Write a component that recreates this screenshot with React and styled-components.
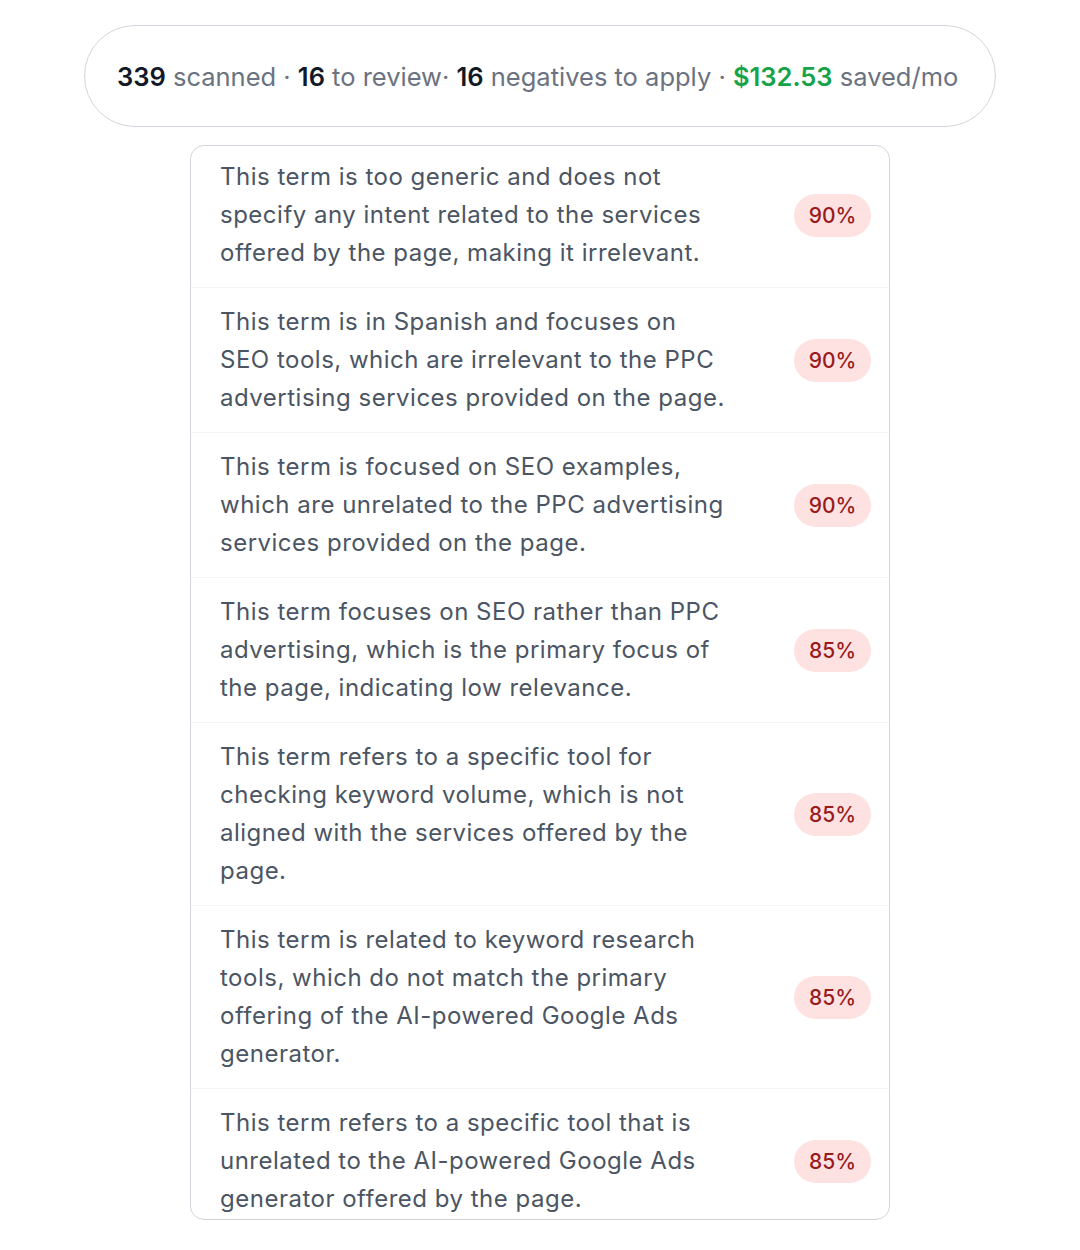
import React from "react";
import styled, { createGlobalStyle } from "styled-components";

const GlobalStyle = createGlobalStyle`
  html, body {
    margin: 0;
    padding: 0;
    background: #ffffff;
  }
  body {
    font-family: Inter, "Liberation Sans", sans-serif;
    -webkit-font-smoothing: antialiased;
  }
`;

const suggestions = [
  {
    reason:
      "This term is too generic and does not specify any intent related to the services offered by the page, making it irrelevant.",
    score: 90,
  },
  {
    reason:
      "This term is in Spanish and focuses on SEO tools, which are irrelevant to the PPC advertising services provided on the page.",
    score: 90,
  },
  {
    reason:
      "This term is focused on SEO examples, which are unrelated to the PPC advertising services provided on the page.",
    score: 90,
  },
  {
    reason:
      "This term focuses on SEO rather than PPC advertising, which is the primary focus of the page, indicating low relevance.",
    score: 85,
  },
  {
    reason:
      "This term refers to a specific tool for checking keyword volume, which is not aligned with the services offered by the page.",
    score: 85,
  },
  {
    reason:
      "This term is related to keyword research tools, which do not match the primary offering of the AI-powered Google Ads generator.",
    score: 85,
  },
  {
    reason:
      "This term refers to a specific tool that is unrelated to the AI-powered Google Ads generator offered by the page.",
    score: 85,
  },
];

export default function App() {
  return (
    <Page>
      <GlobalStyle />
      <Summary>
        <Strong>339</Strong> scanned · <Strong>16</Strong> to review·{" "}
        <Strong>16</Strong> negatives to apply ·{" "}
        <Strong $green>$132.53</Strong> saved/mo
      </Summary>

      <List>
        <Rows>
          {suggestions.map((s, i) => (
            <Row key={i}>
              <Reason>{s.reason}</Reason>
              <Badge>{s.score}%</Badge>
            </Row>
          ))}
        </Rows>
      </List>
    </Page>
  );
}

const Page = styled.div`
  display: flex;
  flex-direction: column;
  align-items: center;
  gap: 18px;
  padding-top: 25px;
`;

const Summary = styled.div`
  box-sizing: border-box;
  width: 912px;
  height: 102px;
  display: flex;
  align-items: center;
  padding: 0 32px;
  border: 1px solid #d1d5db;
  border-radius: 51px;
  font-size: 25.5px;
  color: #6b7280;
  white-space: pre;
`;

const Strong = styled.span`
  font-weight: 600;
  color: ${(p) => (p.$green ? "#16a34a" : "#111827")};
`;

/* fixed-height list, scrolled a few pixels past its first row */
const List = styled.div`
  box-sizing: border-box;
  width: 700px;
  height: 1075px;
  border: 1px solid #d1d5db;
  border-radius: 14px;
  overflow: hidden;
`;

const Rows = styled.div`
  margin-top: -3px;
`;

const Row = styled.div`
  display: flex;
  align-items: center;
  justify-content: space-between;
  padding: 15px 18px 15px 29px;
  border-bottom: 1px solid #f3f4f6;
`;

const Reason = styled.p`
  margin: 0;
  width: 510px;
  font-size: 24px;
  line-height: 38px;
  letter-spacing: 0.5px;
  color: #4b5563;
`;

const Badge = styled.span`
  display: inline-flex;
  align-items: center;
  justify-content: center;
  width: 77px;
  height: 43px;
  border-radius: 22px;
  background: #fee2e2;
  color: #991b1b;
  font-size: 21px;
  font-weight: 500;
`;
